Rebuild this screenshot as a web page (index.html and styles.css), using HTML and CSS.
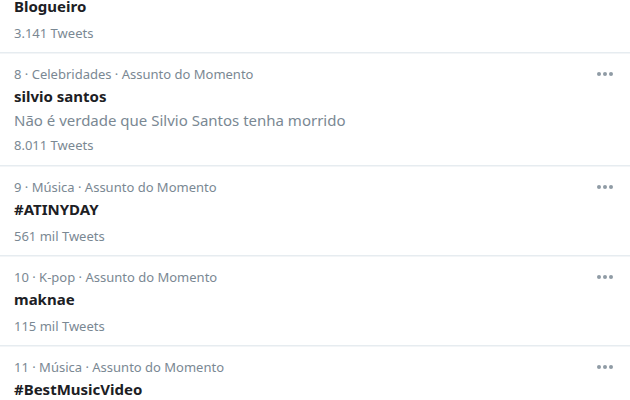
FILE: index.html
```html
<!DOCTYPE html>
<html lang="pt">
<head>
<meta charset="utf-8">
<link rel="stylesheet" href="styles.css">
</head>
<body>
<div class="list">
  <div class="trend">
    <div class="body">
      <div class="meta">&nbsp;</div>
      <div class="title">Blogueiro</div>
      <div class="count">3.141 Tweets</div>
    </div>
  </div>
  <div class="trend">
    <div class="body">
      <div class="meta">8 · Celebridades · Assunto do Momento</div>
      <div class="title">silvio santos</div>
      <div class="desc">Não é verdade que Silvio Santos tenha morrido</div>
      <div class="count">8.011 Tweets</div>
    </div>
    <div class="more"><span></span><span></span><span></span></div>
  </div>
  <div class="trend">
    <div class="body">
      <div class="meta">9 · Música · Assunto do Momento</div>
      <div class="title">#ATINYDAY</div>
      <div class="count">561 mil Tweets</div>
    </div>
    <div class="more"><span></span><span></span><span></span></div>
  </div>
  <div class="trend">
    <div class="body">
      <div class="meta">10 · K-pop · Assunto do Momento</div>
      <div class="title">maknae</div>
      <div class="count">115 mil Tweets</div>
    </div>
    <div class="more"><span></span><span></span><span></span></div>
  </div>
  <div class="trend">
    <div class="body">
      <div class="meta">11 · Música · Assunto do Momento</div>
      <div class="title">#BestMusicVideo</div>
    </div>
    <div class="more"><span></span><span></span><span></span></div>
  </div>
</div>
</body>
</html>
```
FILE: styles.css
```css
html, body {
  margin: 0;
  background: #ffffff;
  overflow: hidden;
}
body {
  font-family: "Noto Sans", "Open Sans", sans-serif;
  color: #14171a;
  width: 630px;
  height: 400px;
}
.list {
  margin-top: -37px;
}
.trend {
  display: flex;
  justify-content: space-between;
  padding: 10px 17px 7px 14px;
  border-bottom: 1px solid #e6ecf0;
  box-shadow: 0 1px 0 #f3f5f7;
}
.meta {
  font-size: 13px;
  line-height: 23px;
  color: #7a8893;
}
.title {
  font-size: 15px;
  font-weight: 700;
  line-height: 20px;
  color: #1c2024;
}
.desc {
  font-size: 15px;
  line-height: 24px;
  margin-top: 2px;
  color: #7a8893;
}
.count {
  font-size: 13px;
  line-height: 24px;
  color: #7a8893;
}
.title + .count {
  margin-top: 5px;
}
.desc + .count {
  margin-top: 1px;
  line-height: 25px;
}
.more {
  display: flex;
  gap: 2px;
  margin-top: 9px;
  height: 5px;
}
.more span {
  width: 4px;
  height: 4px;
  border-radius: 50%;
  background: #8f9ba5;
}
```
